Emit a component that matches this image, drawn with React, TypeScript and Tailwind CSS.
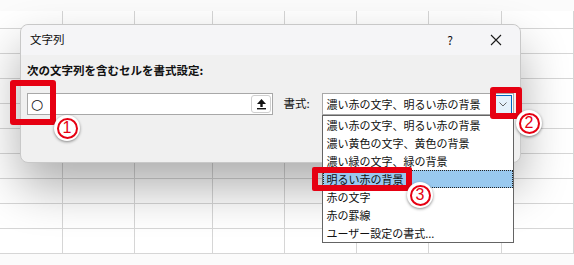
import React from 'react';

const cols = [63, 72, 78, 72, 72, 72, 73, 72];
const rowHeights = [18, 25, 25, 25, 25, 25, 25, 25, 25, 25];

const options = [
  '濃い赤の文字、明るい赤の背景',
  '濃い黄色の文字、黄色の背景',
  '濃い緑の文字、緑の背景',
  '明るい赤の背景',
  '赤の文字',
  '赤の罫線',
  'ユーザー設定の書式...',
];

const Badge = ({ n, className }: { n: number; className: string }) => (
  <div
    className={`absolute w-[26px] h-[26px] rounded-full bg-white shadow-[0_1px_3px_rgba(0,0,0,0.45)] flex items-center justify-center ${className}`}
  >
    <div className="w-[21px] h-[21px] rounded-full border-2 border-[#e60012] flex items-center justify-center text-[#e60012] text-[16px] leading-none font-['Liberation_Sans',sans-serif]">
      {n}
    </div>
  </div>
);

const App: React.FC = () => {
  return (
    <div className="relative w-[574px] h-[265px] overflow-hidden bg-white font-['Noto_Sans_CJK_JP','Noto_Sans',sans-serif] text-[#111]">
      {/* spreadsheet behind */}
      <div className="flex flex-col h-full">
        <div className="h-[11px] bg-[#fbfbfb]" />
        {rowHeights.map((h, i) => (
          <div key={i} className="flex border-b border-[#d6d6d6]" style={{ height: h }}>
            {cols.map((w, j) => (
              <div key={j} className="border-r border-[#d6d6d6] shrink-0" style={{ width: w }} />
            ))}
          </div>
        ))}
        <div className="flex-1 bg-[#fbfbfb]" />
      </div>

      {/* dialog */}
      <div className="absolute left-[20px] top-[24px] w-[501px] h-[139px] rounded-[8px] bg-[#f0f0f0] border border-[#c8c8c8] shadow-[0_24px_48px_rgba(0,0,0,0.32)]">
        <div className="h-[30px] flex items-center pl-[9px] bg-[#f5f5f7] rounded-t-[8px] text-[11.5px]">
          <span className="flex-1">文字列</span>
          <span className="w-[12px] text-center mr-[34px] text-[12px]">?</span>
          <svg width="12" height="12" viewBox="0 0 12 12" className="mr-[18px]">
            <path d="M1 1L11 11M11 1L1 11" stroke="#1a1a1a" strokeWidth="1.1" />
          </svg>
        </div>
        <div className="px-[6px] pt-[7px]">
          <div className="h-[18px] flex items-center font-bold text-[11.5px]">次の文字列を含むセルを書式設定:</div>
          <div className="mt-[13px] flex items-center">
            <div className="w-[247px] h-[22px] bg-white border border-[#a8a8a8] flex items-center pl-[3px] pr-[1px]">
              <span className="flex-1 text-[14px] leading-none font-['DejaVu_Sans',sans-serif]">○</span>
              <div className="w-[20px] h-[18px] border border-[#cfcfcf] rounded-[3px] bg-white flex items-center justify-center">
                <svg width="11" height="12" viewBox="0 0 11 12">
                  <path d="M5.5 1L10 6H1Z" fill="#111" />
                  <rect x="4.3" y="5" width="2.4" height="4" fill="#111" />
                  <rect x="1" y="10" width="9" height="1.4" fill="#111" />
                </svg>
              </div>
            </div>
            <span className="w-[49px] shrink-0 pl-[10px] text-[11.5px]">書式:</span>
            <div className="relative w-[192px] h-[22px] bg-white border border-[#a8a8a8] flex items-center pl-[3px] text-[11px]">
              <span className="flex-1 whitespace-nowrap">濃い赤の文字、明るい赤の背景</span>
              <div className="w-[18px] h-[19px] mr-[1px] border border-[#0067c0] bg-[#e5f1fb] flex items-center justify-center">
                <svg width="8" height="5" viewBox="0 0 8 5">
                  <path d="M0.5 0.5L4 4L7.5 0.5" fill="none" stroke="#555" strokeWidth="0.9" />
                </svg>
              </div>
              <div className="absolute left-[-1px] top-[21px] w-[192px] bg-white border border-[#646464] z-10">
                {options.map((o, i) => (
                  <div
                    key={o}
                    className={`h-[18px] flex items-center pl-[3px] whitespace-nowrap ${
                      i === 3 ? 'bg-[#99c9ef] outline-1 outline-dotted outline-offset-[-1px] outline-[#222]' : ''
                    }`}
                  >
                    {o}
                  </div>
                ))}
              </div>
            </div>
          </div>
        </div>
      </div>

      {/* annotations */}
      <div className="absolute left-[10px] top-[80px] w-[46px] h-[45px] border-[6px] border-[#e60012] rounded-[3px] z-20" />
      <Badge n={1} className="left-[54px] top-[115px] z-20" />
      <div className="absolute left-[490px] top-[87px] w-[32px] h-[32px] border-[6px] border-[#e60012] rounded-[3px] z-20" />
      <Badge n={2} className="left-[516px] top-[110px] z-20" />
      <div className="absolute left-[312px] top-[167px] w-[100px] h-[24px] border-[6px] border-[#e60012] rounded-[2px] z-20" />
      <Badge n={3} className="left-[407px] top-[182px] z-20" />
    </div>
  );
};

export default App;
